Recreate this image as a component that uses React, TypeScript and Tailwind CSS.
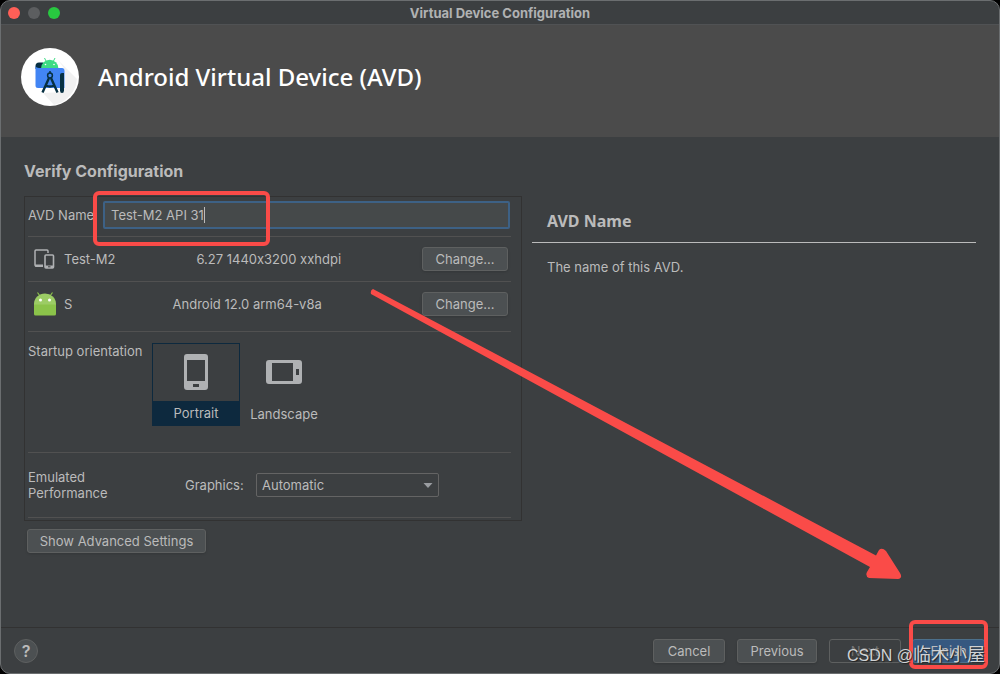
import { useState } from 'react';
import type { ReactNode } from 'react';
import clsx from 'clsx';

type Orientation = 'portrait' | 'landscape';

interface ButtonProps {
  children: ReactNode;
  className?: string;
  disabled?: boolean;
  primary?: boolean;
}

function Button({ children, className, disabled, primary }: ButtonProps) {
  return (
    <button
      type="button"
      disabled={disabled}
      className={clsx(
        'h-6 shrink-0 rounded-[3px] border text-[13px] leading-4',
        primary && 'border-[#4c708c] bg-[#365880] text-[#bbbbbb]',
        disabled && 'border-[#5e6060] text-[#777777]',
        !primary && !disabled && 'border-[#5e6060] bg-[#4c5052] text-[#bbbbbb] shadow-sm',
        className
      )}
    >
      {children}
    </button>
  );
}

function StudioLogo() {
  return (
    <svg className="size-[58px] shrink-0" viewBox="0 0 58 58">
      <circle cx="29" cy="29" r="29" fill="#ffffff" />
      <path d="M37 12L56 31A29 29 0 0 1 33 57L22 45L43 44V20Z" fill="#f1f1f1" />
      <path d="M18 14.5H22V21H14.5V18Q14.5 14.5 18 14.5Z" fill="#073042" />
      <path d="M20 20.5A8.7 8.7 0 0 1 37.400 20.500Z" fill="#3ddc84" />
      <path d="M23.500 10L25.500 14M34 10L32 14" stroke="#3ddc84" strokeWidth="1" />
      <circle cx="24.500" cy="16.500" r="0.800" fill="#ffffff" />
      <circle cx="33" cy="16.500" r="0.800" fill="#ffffff" />
      <path d="M14.500 18Q15 20 18 20H41Q43.500 20 43.500 23V40H17Q14.500 40 14.500 37.500Z" fill="#4285f4" />
      <path d="M43 25V42.500Q43 45 41 45Q39 45 39 42.500V27Q39 25 41 25Z" fill="#073042" />
      <path
        d="M28 30L21.500 44.500M30 30L36.500 44.500M25 37.500Q29 39.500 33 37.500"
        stroke="#073042"
        strokeWidth="2.400"
        fill="none"
      />
      <circle cx="29" cy="27.500" r="2.400" fill="#4285f4" stroke="#073042" strokeWidth="1.500" />
      <path d="M29 23V25.500" stroke="#073042" strokeWidth="1.500" />
    </svg>
  );
}

function DevicesIcon() {
  return (
    <svg className="h-5 w-[22px] shrink-0" viewBox="0 0 22 20" fill="none">
      <path d="M14 4V2Q14 1 13 1H2Q1 1 1 2V16Q1 17 2 17H9" stroke="#afb1b3" strokeWidth="1.500" />
      <path d="M1 15.500H9V18H2Q1 18 1 17Z" fill="#afb1b3" />
      <rect x="11" y="6" width="8.500" height="13" rx="1" stroke="#afb1b3" strokeWidth="1.600" />
      <path d="M11 16.500H19V19H11Z" fill="#afb1b3" />
      <path d="M14 17.800H16.500" stroke="#3c3f41" />
    </svg>
  );
}

function AndroidIcon() {
  return (
    <svg className="h-6 w-[22px] shrink-0" viewBox="0 0 22 24">
      <path d="M3.500 0.500L6 4M18.500 0.500L16 4" stroke="#8bc34a" strokeWidth="1.200" />
      <path d="M0 13V12A11 10.500 0 0 1 22 12V13Z" fill="#9ccc65" />
      <path d="M0 12.500H22V22Q22 23.500 20.500 23.500H1.500Q0 23.500 0 22Z" fill="#8bc34a" />
      <circle cx="6.500" cy="8" r="1.500" fill="#ffffff" />
      <circle cx="15.500" cy="8" r="1.500" fill="#ffffff" />
    </svg>
  );
}

function PortraitIcon() {
  return (
    <svg className="h-9 w-6" viewBox="0 0 24 36" fill="#afb1b3" fillRule="evenodd">
      <path d="M3 0H21Q24 0 24 3V33Q24 36 21 36H3Q0 36 0 33V3Q0 0 3 0ZM3 6V27H21V6ZM9 30V33H15V30Z" />
    </svg>
  );
}

function LandscapeIcon() {
  return (
    <svg className="h-6 w-9" viewBox="0 0 36 24" fill="#afb1b3" fillRule="evenodd">
      <path d="M3 0H33Q36 0 36 3V21Q36 24 33 24H3Q0 24 0 21V3Q0 0 3 0ZM6 3V21H27V3ZM30 9V15H33V9Z" />
    </svg>
  );
}

interface OrientationOptionProps {
  value: Orientation;
  label: string;
  icon: ReactNode;
  selected: boolean;
  onSelect: (value: Orientation) => void;
}

function OrientationOption({ value, label, icon, selected, onSelect }: OrientationOptionProps) {
  return (
    <label
      className={clsx(
        'flex h-[83px] w-[88px] flex-col border',
        selected ? 'border-[#0d293e]' : 'border-transparent'
      )}
    >
      <input
        type="radio"
        name="orientation"
        value={value}
        checked={selected}
        onChange={() => onSelect(value)}
        className="sr-only"
      />
      <span className="flex flex-1 items-center justify-center pb-0.5">{icon}</span>
      <span className={clsx('text-center', selected ? 'bg-[#0d293e] py-1' : 'pt-[5px] pb-[3px]')}>
        {label}
      </span>
    </label>
  );
}

function ConfigurationForm() {
  const [name, setName] = useState('Test-M2 API 31');
  const [orientation, setOrientation] = useState<Orientation>('portrait');

  return (
    <div className="border border-[#323232] pt-px pr-2.5 pb-0.5 pl-[3px]">
      {/* AVD name */}
      <div className="flex h-[39px] items-center border-b border-[#515151] pb-1">
        <label htmlFor="avd-name" className="w-[75px] whitespace-nowrap">
          AVD Name
        </label>
        <div className="relative mr-px flex-1">
          <div className="flex h-7 items-center rounded-[2px] border-2 border-[#3d6185] bg-[#45494a] px-1.5">
            <input
              id="avd-name"
              value={name}
              onChange={(e) => setName(e.target.value)}
              className="field-sizing-content bg-transparent outline-none"
            />
            <span className="h-4 w-px bg-[#bbbbbb]" />
          </div>
          <div className="pointer-events-none absolute -top-2.5 -left-2.5 h-[55px] w-[177px] rounded-md border-4 border-[#fa4b48]" />
        </div>
      </div>

      {/* Hardware profile */}
      <div className="flex h-[45px] items-center border-b border-[#515151] pr-[3px] pl-1.5">
        <DevicesIcon />
        <span className="ml-2">Test-M2</span>
        <span className="flex-1 text-center">6.27 1440x3200 xxhdpi</span>
        <Button className="w-[86px]">Change...</Button>
      </div>

      {/* System image */}
      <div className="flex h-[50px] items-center border-b border-[#515151] pr-[3px] pb-1.5 pl-1.5">
        <AndroidIcon />
        <span className="ml-2">S</span>
        <span className="flex-1 text-center">Android 12.0 arm64-v8a</span>
        <Button className="w-[86px]">Change...</Button>
      </div>

      <fieldset className="flex h-[121px] border-b border-[#515151] pt-[11px]">
        <legend className="float-left w-[124px]">Startup orientation</legend>
        <OrientationOption
          value="portrait"
          label="Portrait"
          icon={<PortraitIcon />}
          selected={orientation === 'portrait'}
          onSelect={setOrientation}
        />
        <OrientationOption
          value="landscape"
          label="Landscape"
          icon={<LandscapeIcon />}
          selected={orientation === 'landscape'}
          onSelect={setOrientation}
        />
      </fieldset>

      <div className="flex h-[65px] items-center border-b border-[#515151]">
        <span className="w-[157px] leading-4">
          Emulated
          <br />
          Performance
        </span>
        <label htmlFor="graphics" className="w-[71px]">
          Graphics:
        </label>
        <div className="relative w-[183px]">
          <select
            id="graphics"
            className="h-6 w-full appearance-none rounded-[2px] border border-[#646464] bg-[#3c3f41] px-[5px] leading-4"
          >
            <option>Automatic</option>
            <option>Hardware</option>
            <option>Software</option>
          </select>
          <svg
            className="pointer-events-none absolute top-2.5 right-1.5 h-[5px] w-2.5"
            viewBox="0 0 10 5"
            fill="#9a9da1"
          >
            <path d="M0.500 0H9.500L5 5Z" />
          </svg>
        </div>
      </div>
    </div>
  );
}

export default function App() {
  return (
    <div className="min-h-screen bg-black font-['Inter',sans-serif] text-[13px] leading-4 text-[#bbbbbb] [font-feature-settings:'calt'_0]">
      <div className="relative flex min-h-screen flex-col overflow-hidden rounded-[10px] border border-[#6b6e70] bg-[#3c3f41]">
        {/* Title bar */}
        <div className="grid h-6 grid-cols-[1fr_auto_1fr] items-center border-b border-[#505254]">
          <div className="flex gap-2 pl-[7px]">
            <span className="size-3 rounded-full bg-[#ff5f57]" />
            <span className="size-3 rounded-full bg-[#5c5e60]" />
            <span className="size-3 rounded-full bg-[#28c840]" />
          </div>
          <div className="font-bold text-[#b0b2b3]">Virtual Device Configuration</div>
        </div>

        <header className="flex h-28 items-center gap-[19px] bg-[#4b4b4b] pb-2 pl-5">
          <StudioLogo />
          <h1 className="font-['Noto_Sans',sans-serif] text-2xl font-medium text-white">
            Android Virtual Device (AVD)
          </h1>
        </header>

        <main className="flex flex-1 flex-col px-[23px] pt-6">
          <h2 className="text-base leading-5 font-bold">Verify Configuration</h2>
          <div className="mt-[15px] flex gap-2.5">
            <div className="w-[498px] shrink-0">
              <ConfigurationForm />
              <Button className="mt-2 ml-[3px] w-[179px]">Show Advanced Settings</Button>
            </div>
            <aside className="flex-1 pt-3.5">
              <h3 className="border-b border-[#bbbbbb] px-[15px] pb-2.5 font-['Noto_Sans',sans-serif] text-base leading-[22px] font-bold">
                AVD Name
              </h3>
              <p className="px-[15px] pt-4">The name of this AVD.</p>
            </aside>
          </div>
        </main>

        <footer className="flex h-[46px] items-center border-t border-[#323232] pr-3.5 pl-[13px]">
          <button
            type="button"
            className="size-6 rounded-full border border-[#5e6060] bg-[#4c5052] text-base leading-4 font-semibold"
          >
            ?
          </button>
          <div className="ml-auto flex gap-3">
            <Button className="w-[72px]">Cancel</Button>
            <Button className="w-20">Previous</Button>
            <Button className="w-[72px]" disabled>
              Next
            </Button>
            <div className="relative -ml-px">
              <Button className="w-[73px]" primary>
                Finish
              </Button>
              <div className="pointer-events-none absolute -top-[19px] -right-[3px] h-[49px] w-[79px] rounded-md border-4 border-[#fa4b48]" />
              <div className="pointer-events-none absolute right-0 bottom-[-5px] font-['Liberation_Sans','Noto_Sans_CJK_SC',sans-serif] text-base leading-6 whitespace-nowrap text-[#d0d2d4] text-shadow-[1px_1px_1px_#222222]">
                CSDN @<span className="text-lg leading-6">临木小屋</span>
              </div>
            </div>
          </div>
        </footer>

        {/* Arrow pointing at the Finish button */}
        <svg
          className="pointer-events-none absolute right-[97px] bottom-[93px] h-[292px] w-[532px]"
          viewBox="370 288 532 292"
          fill="#fa4b48"
        >
          <path d="M373 289L876 555.500L879 550Q882 547 886 551L900 573Q903 578 898 579L869 578Q865 576 867 572L870 567L371 294Q370 290 373 289Z" />
        </svg>
      </div>
    </div>
  );
}
